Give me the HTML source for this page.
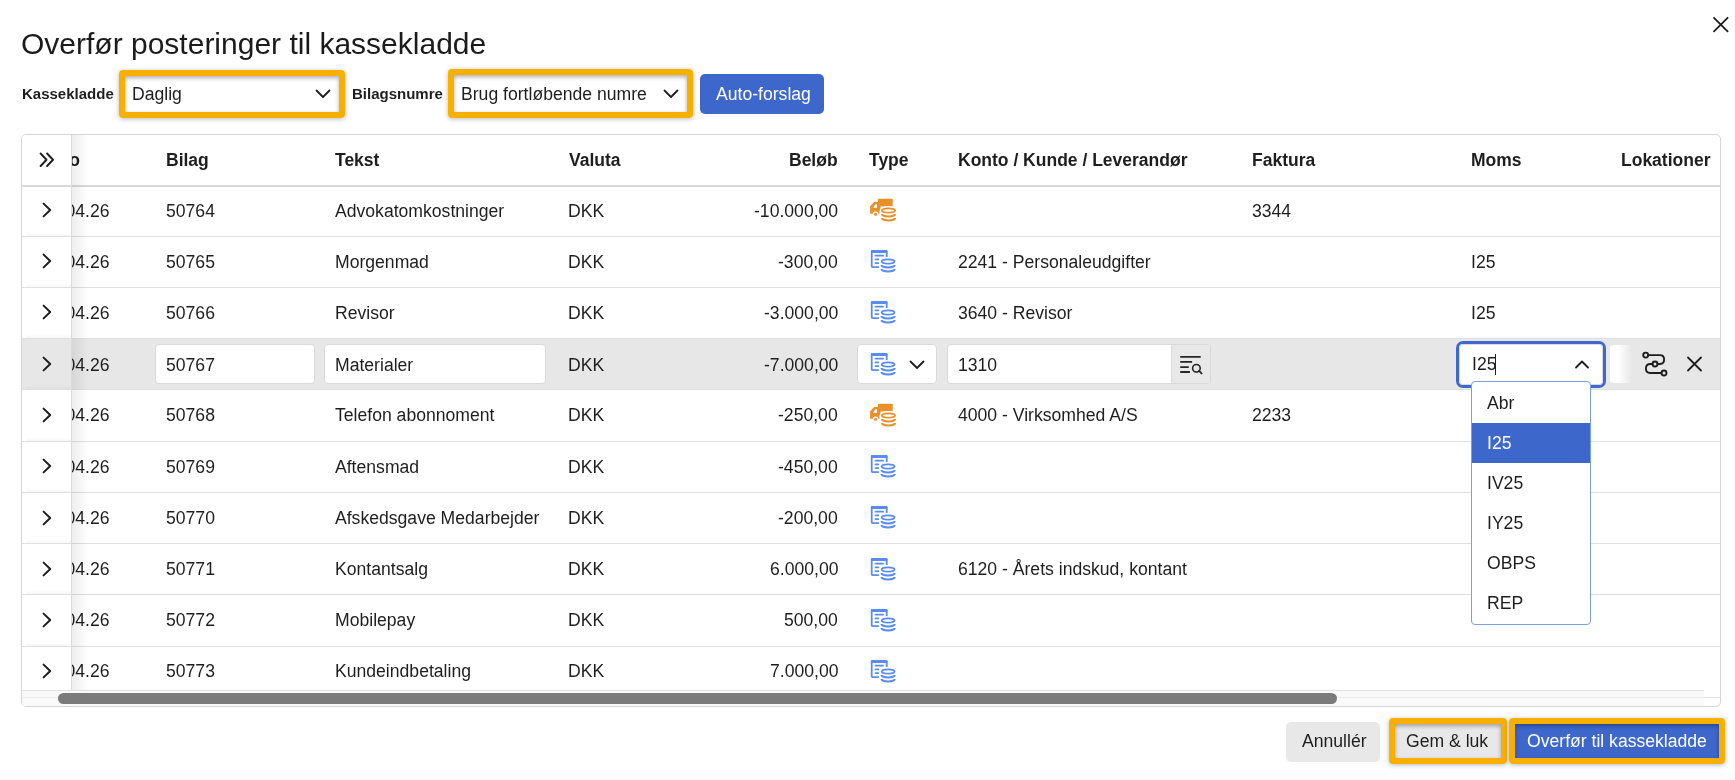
<!DOCTYPE html>
<html><head><meta charset="utf-8">
<style>
*{box-sizing:border-box;margin:0;padding:0}
html,body{width:1735px;height:780px;overflow:hidden;background:#fff;-webkit-font-smoothing:antialiased;font-family:"Liberation Sans",sans-serif;color:#1e1e1e}
.a{position:absolute;white-space:nowrap}
.t{position:absolute;white-space:nowrap;font-size:17.6px;line-height:20px;will-change:transform}
.t.b{font-size:17.5px;font-weight:bold}
.b{font-weight:bold}
.ic{position:absolute;overflow:visible}
.rl{position:absolute;left:0;width:1735px;height:1px;background:#e0e0e0}
.inp{position:absolute;background:#fff;border:1px solid #d9d9d9;border-radius:4px}
</style></head><body>

<div class="a" style="left:21px;top:25.6px;font-size:30px;line-height:36px;color:#1b1b1b;will-change:transform">Overfør posteringer til kassekladde</div>
<svg class="ic" style="left:1712px;top:16px" width="17" height="17" viewBox="0 0 17 17"><path d="M2 1.8 L15.6 15.4 M15.6 1.8 L2 15.4" stroke="#1e1e1e" stroke-width="1.8" stroke-linecap="round"/></svg>
<div class="a b" style="left:21.5px;top:85.2px;font-size:15px;line-height:18px;will-change:transform">Kassekladde</div>
<div class="a b" style="left:352px;top:85.2px;font-size:15px;line-height:18px;will-change:transform">Bilagsnumre</div>
<div class="t" style="left:131.5px;top:83.90px;">Daglig</div>
<svg class="ic" style="left:315px;top:88px" width="16" height="12" viewBox="0 0 16 12"><path d="M1.5 2.5 L8 9 L14.5 2.5" fill="none" stroke="#1e1e1e" stroke-width="1.8" stroke-linecap="round" stroke-linejoin="round"/></svg>
<div class="a" style="left:119px;top:70px;width:226px;height:48px;border:6px solid #f8b000;border-radius:4px;box-shadow:0 1px 5px rgba(0,0,0,.28), inset 0 2px 4px rgba(0,0,0,.32)"></div>
<div class="t" style="left:461px;top:83.90px;">Brug fortløbende numre</div>
<svg class="ic" style="left:663px;top:88px" width="16" height="12" viewBox="0 0 16 12"><path d="M1.5 2.5 L8 9 L14.5 2.5" fill="none" stroke="#1e1e1e" stroke-width="1.8" stroke-linecap="round" stroke-linejoin="round"/></svg>
<div class="a" style="left:448px;top:69px;width:245px;height:49px;border:6px solid #f8b000;border-radius:4px;box-shadow:0 1px 5px rgba(0,0,0,.28), inset 0 2px 4px rgba(0,0,0,.32)"></div>
<div class="a" style="left:700px;top:74px;width:124px;height:40px;background:#3d67cb;border-radius:5px"></div>
<div class="t" style="left:715.5px;top:84.20px;color:#fff">Auto-forslag</div>
<div class="a" style="left:21px;top:134px;width:1700px;height:573px;border:1px solid #d6d6d6;border-radius:5px;overflow:hidden">
<div style="position:absolute;left:-22px;top:-135px;width:1735px;height:780px">
<div class="t b" style="left:40.8px;top:149.70px;">Dato</div>
<div class="t b" style="left:166px;top:149.70px;">Bilag</div>
<div class="t b" style="left:335px;top:149.70px;">Tekst</div>
<div class="t b" style="left:568.5px;top:149.70px;">Valuta</div>
<div class="t b" style="left:868.5px;top:149.70px;">Type</div>
<div class="t b" style="left:958px;top:149.70px;">Konto / Kunde / Leverandør</div>
<div class="t b" style="left:1252px;top:149.70px;">Faktura</div>
<div class="t b" style="left:1471px;top:149.70px;">Moms</div>
<div class="t b" style="left:1621px;top:149.70px;">Lokationer</div>
<div class="t b" style="right:897px;top:149.70px;">Beløb</div>
<div class="a" style="left:0;top:185px;width:1735px;height:2px;background:#d9d9d9"></div>
<div class="t" style="left:166px;top:200.60px;">50764</div>
<div class="t" style="left:335px;top:200.60px;">Advokatomkostninger</div>
<div class="t" style="left:567.8px;top:200.60px;">DKK</div>
<div class="t" style="right:897px;top:200.60px;">-10.000,00</div>
<svg class="ic" style="left:862px;top:192px" width="40" height="36" viewBox="0 0 40 36">
<g fill="#e8912b">
<path d="M15.9 7.6 Q15.9 6.7 16.8 6.7 L29.8 6.7 Q30.7 6.7 30.7 7.6 L30.7 14.4 L15.9 14.4 Z"/>
<path d="M8.1 14.3 L12.1 9.9 L16.2 9.9 L16.2 6.9 L18.5 6.9 L18.5 21.7 L8.1 21.7 Z M11.1 15.7 L15 15.7 L15 12.2 L13.4 12.2 Z" fill-rule="evenodd"/>
</g>
<circle cx="13.6" cy="22.3" r="2.9" fill="#fff"/>
<circle cx="13.6" cy="22.3" r="1.55" fill="#e8912b"/>
<ellipse cx="26.5" cy="19" rx="9" ry="5" fill="#fff"/>
<rect x="17.5" y="19" width="18" height="11" fill="#fff"/>
<g fill="none" stroke="#e8912b" stroke-width="1.8" stroke-linecap="butt">
<ellipse cx="26.5" cy="18.5" rx="6.6" ry="2.1"/>
<path d="M19.9 22.1 A6.6 2.4 0 0 0 33.1 22.1" stroke-width="2"/>
<path d="M19.9 26 A6.6 2.4 0 0 0 33.1 26" stroke-width="2"/>
</g>
</svg>
<div class="t" style="left:1252px;top:200.60px;">3344</div>
<div class="t" style="left:40.8px;top:200.60px;">01.04.26</div>
<div class="rl" style="top:236px"></div>
<div class="t" style="left:166px;top:251.60px;">50765</div>
<div class="t" style="left:335px;top:251.60px;">Morgenmad</div>
<div class="t" style="left:567.8px;top:251.60px;">DKK</div>
<div class="t" style="right:897px;top:251.60px;">-300,00</div>
<svg class="ic" style="left:862px;top:243px" width="40" height="36" viewBox="0 0 40 36">
<g fill="none" stroke="#5a8cef" stroke-width="1.8" stroke-linecap="butt" stroke-linejoin="round">
<path d="M16.9 24.2 L10.6 24.2 Q9.7 24.2 9.7 23.3 L9.7 8.8 Q9.7 7.8 10.7 7.8 L23.7 7.8 Q24.7 7.8 24.7 8.8 L24.7 13.9"/>
</g>
<rect x="8.8" y="6.9" width="16.8" height="3.2" rx="1.4" fill="#5a8cef"/>
<g fill="none" stroke="#5a8cef" stroke-width="1.7" stroke-linecap="round">
<path d="M13.5 12.7 L21.1 12.7 M13.5 16.4 L16.3 16.4 M13.5 20.1 L16.3 20.1"/>
</g>
<g fill="none" stroke="#5a8cef" stroke-width="1.8">
<ellipse cx="26.1" cy="18.5" rx="6.4" ry="2.1"/>
<path d="M19.5 22.1 A6.6 2.4 0 0 0 32.7 22.1" stroke-width="2"/>
<path d="M19.5 26 A6.6 2.4 0 0 0 32.7 26" stroke-width="2"/>
</g>
</svg>
<div class="t" style="left:958px;top:251.60px;">2241 - Personaleudgifter</div>
<div class="t" style="left:1471px;top:251.60px;">I25</div>
<div class="t" style="left:40.8px;top:251.60px;">01.04.26</div>
<div class="rl" style="top:287px"></div>
<div class="t" style="left:166px;top:302.60px;">50766</div>
<div class="t" style="left:335px;top:302.60px;">Revisor</div>
<div class="t" style="left:567.8px;top:302.60px;">DKK</div>
<div class="t" style="right:897px;top:302.60px;">-3.000,00</div>
<svg class="ic" style="left:862px;top:294px" width="40" height="36" viewBox="0 0 40 36">
<g fill="none" stroke="#5a8cef" stroke-width="1.8" stroke-linecap="butt" stroke-linejoin="round">
<path d="M16.9 24.2 L10.6 24.2 Q9.7 24.2 9.7 23.3 L9.7 8.8 Q9.7 7.8 10.7 7.8 L23.7 7.8 Q24.7 7.8 24.7 8.8 L24.7 13.9"/>
</g>
<rect x="8.8" y="6.9" width="16.8" height="3.2" rx="1.4" fill="#5a8cef"/>
<g fill="none" stroke="#5a8cef" stroke-width="1.7" stroke-linecap="round">
<path d="M13.5 12.7 L21.1 12.7 M13.5 16.4 L16.3 16.4 M13.5 20.1 L16.3 20.1"/>
</g>
<g fill="none" stroke="#5a8cef" stroke-width="1.8">
<ellipse cx="26.1" cy="18.5" rx="6.4" ry="2.1"/>
<path d="M19.5 22.1 A6.6 2.4 0 0 0 32.7 22.1" stroke-width="2"/>
<path d="M19.5 26 A6.6 2.4 0 0 0 32.7 26" stroke-width="2"/>
</g>
</svg>
<div class="t" style="left:958px;top:302.60px;">3640 - Revisor</div>
<div class="t" style="left:1471px;top:302.60px;">I25</div>
<div class="t" style="left:40.8px;top:302.60px;">01.04.26</div>
<div class="rl" style="top:338px"></div>
<div class="a" style="left:0;top:339px;width:1735px;height:50px;background:#e7e7e7"></div>
<div class="inp" style="left:155px;top:344px;width:160px;height:40px"></div>
<div class="inp" style="left:324px;top:344px;width:222px;height:40px"></div>
<div class="t" style="left:166px;top:354.60px;">50767</div>
<div class="t" style="left:335px;top:354.60px;">Materialer</div>
<div class="t" style="left:567.8px;top:354.60px;">DKK</div>
<div class="t" style="right:897px;top:354.60px;">-7.000,00</div>
<div class="inp" style="left:857px;top:344px;width:80px;height:40px"></div>
<svg class="ic" style="left:862px;top:346px" width="40" height="36" viewBox="0 0 40 36">
<g fill="none" stroke="#5a8cef" stroke-width="1.8" stroke-linecap="butt" stroke-linejoin="round">
<path d="M16.9 24.2 L10.6 24.2 Q9.7 24.2 9.7 23.3 L9.7 8.8 Q9.7 7.8 10.7 7.8 L23.7 7.8 Q24.7 7.8 24.7 8.8 L24.7 13.9"/>
</g>
<rect x="8.8" y="6.9" width="16.8" height="3.2" rx="1.4" fill="#5a8cef"/>
<g fill="none" stroke="#5a8cef" stroke-width="1.7" stroke-linecap="round">
<path d="M13.5 12.7 L21.1 12.7 M13.5 16.4 L16.3 16.4 M13.5 20.1 L16.3 20.1"/>
</g>
<g fill="none" stroke="#5a8cef" stroke-width="1.8">
<ellipse cx="26.1" cy="18.5" rx="6.4" ry="2.1"/>
<path d="M19.5 22.1 A6.6 2.4 0 0 0 32.7 22.1" stroke-width="2"/>
<path d="M19.5 26 A6.6 2.4 0 0 0 32.7 26" stroke-width="2"/>
</g>
</svg>
<svg class="ic" style="left:908.5px;top:358.5px" width="16" height="12" viewBox="0 0 16 12"><path d="M1.5 2.5 L8 9 L14.5 2.5" fill="none" stroke="#1e1e1e" stroke-width="1.8" stroke-linecap="round" stroke-linejoin="round"/></svg>
<div class="inp" style="left:947px;top:344px;width:264px;height:40px;overflow:hidden"><div style="position:absolute;right:0;top:0;width:39px;height:100%;background:#e8e8e8;border-left:1px solid #dcdcdc"></div></div>
<div class="t" style="left:958px;top:354.60px;">1310</div>
<svg class="ic" style="left:1179px;top:353px" width="24" height="22" viewBox="0 0 24 22"><g fill="none" stroke="#262626" stroke-width="1.9"><path d="M1.2 3.9 L21.7 3.9 M1.2 8.9 L13.1 8.9 M1.2 14.1 L9.8 14.1 M1.2 19 L10.9 19"/><circle cx="17.4" cy="15.3" r="3.8" stroke-width="1.6"/><path d="M20 17.9 L22.6 20.4" stroke-linecap="round"/></g></svg>
<div class="a" style="left:1455.5px;top:340.5px;width:150px;height:47px;border:3px solid #3f68cd;border-radius:7px;background:#fff"><div style="position:absolute;inset:0;border:1px solid #d9d9d9;border-radius:4px"></div></div>
<div class="t" style="left:1471.5px;top:353.90px;">I25</div>
<div class="a" style="left:1494.5px;top:354px;width:1px;height:21px;background:#1e1e1e"></div>
<svg class="ic" style="left:1574px;top:358px" width="16" height="12" viewBox="0 0 16 12"><path d="M2 9.5 L8 3.5 L14 9.5" fill="none" stroke="#1e1e1e" stroke-width="1.8" stroke-linecap="round" stroke-linejoin="round"/></svg>
<div class="a" style="left:1609.5px;top:345px;width:40px;height:38px;border-radius:4px;background:linear-gradient(to right,#fff 0,#fff 8px,#e7e7e7 22px)"></div>
<svg class="ic" style="left:1640px;top:349px" width="30" height="30" viewBox="0 0 30 30"><g fill="none" stroke="#1e1e1e" stroke-width="1.9" stroke-linecap="round"><circle cx="5.7" cy="6.1" r="2.5"/><circle cx="15" cy="15" r="2.5"/><circle cx="24" cy="24" r="2.5"/><path d="M8.2 6.1 L20 6.1 Q24.1 6.1 24.1 10.55 Q24.1 15 20 15 L17.5 15 M12.5 15 L10.2 15 Q5.9 15 5.9 19.5 Q5.9 24 10.2 24 L21.5 24"/></g></svg>
<svg class="ic" style="left:1686px;top:356px" width="17" height="16" viewBox="0 0 17 16"><path d="M2 1.5 L15 14.5 M15 1.5 L2 14.5" stroke="#1e1e1e" stroke-width="1.8" stroke-linecap="round"/></svg>
<div class="t" style="left:40.8px;top:354.60px;">01.04.26</div>
<div class="rl" style="top:389px"></div>
<div class="t" style="left:166px;top:405.45px;">50768</div>
<div class="t" style="left:335px;top:405.45px;">Telefon abonnoment</div>
<div class="t" style="left:567.8px;top:405.45px;">DKK</div>
<div class="t" style="right:897px;top:405.45px;">-250,00</div>
<svg class="ic" style="left:862px;top:397px" width="40" height="36" viewBox="0 0 40 36">
<g fill="#e8912b">
<path d="M15.9 7.6 Q15.9 6.7 16.8 6.7 L29.8 6.7 Q30.7 6.7 30.7 7.6 L30.7 14.4 L15.9 14.4 Z"/>
<path d="M8.1 14.3 L12.1 9.9 L16.2 9.9 L16.2 6.9 L18.5 6.9 L18.5 21.7 L8.1 21.7 Z M11.1 15.7 L15 15.7 L15 12.2 L13.4 12.2 Z" fill-rule="evenodd"/>
</g>
<circle cx="13.6" cy="22.3" r="2.9" fill="#fff"/>
<circle cx="13.6" cy="22.3" r="1.55" fill="#e8912b"/>
<ellipse cx="26.5" cy="19" rx="9" ry="5" fill="#fff"/>
<rect x="17.5" y="19" width="18" height="11" fill="#fff"/>
<g fill="none" stroke="#e8912b" stroke-width="1.8" stroke-linecap="butt">
<ellipse cx="26.5" cy="18.5" rx="6.6" ry="2.1"/>
<path d="M19.9 22.1 A6.6 2.4 0 0 0 33.1 22.1" stroke-width="2"/>
<path d="M19.9 26 A6.6 2.4 0 0 0 33.1 26" stroke-width="2"/>
</g>
</svg>
<div class="t" style="left:958px;top:405.45px;">4000 - Virksomhed A/S</div>
<div class="t" style="left:1252px;top:405.45px;">2233</div>
<div class="t" style="left:40.8px;top:405.45px;">01.04.26</div>
<div class="rl" style="top:441px"></div>
<div class="t" style="left:166px;top:456.80px;">50769</div>
<div class="t" style="left:335px;top:456.80px;">Aftensmad</div>
<div class="t" style="left:567.8px;top:456.80px;">DKK</div>
<div class="t" style="right:897px;top:456.80px;">-450,00</div>
<svg class="ic" style="left:862px;top:448px" width="40" height="36" viewBox="0 0 40 36">
<g fill="none" stroke="#5a8cef" stroke-width="1.8" stroke-linecap="butt" stroke-linejoin="round">
<path d="M16.9 24.2 L10.6 24.2 Q9.7 24.2 9.7 23.3 L9.7 8.8 Q9.7 7.8 10.7 7.8 L23.7 7.8 Q24.7 7.8 24.7 8.8 L24.7 13.9"/>
</g>
<rect x="8.8" y="6.9" width="16.8" height="3.2" rx="1.4" fill="#5a8cef"/>
<g fill="none" stroke="#5a8cef" stroke-width="1.7" stroke-linecap="round">
<path d="M13.5 12.7 L21.1 12.7 M13.5 16.4 L16.3 16.4 M13.5 20.1 L16.3 20.1"/>
</g>
<g fill="none" stroke="#5a8cef" stroke-width="1.8">
<ellipse cx="26.1" cy="18.5" rx="6.4" ry="2.1"/>
<path d="M19.5 22.1 A6.6 2.4 0 0 0 32.7 22.1" stroke-width="2"/>
<path d="M19.5 26 A6.6 2.4 0 0 0 32.7 26" stroke-width="2"/>
</g>
</svg>
<div class="t" style="left:40.8px;top:456.80px;">01.04.26</div>
<div class="rl" style="top:492px"></div>
<div class="t" style="left:166px;top:508.10px;">50770</div>
<div class="t" style="left:335px;top:508.10px;">Afskedsgave Medarbejder</div>
<div class="t" style="left:567.8px;top:508.10px;">DKK</div>
<div class="t" style="right:897px;top:508.10px;">-200,00</div>
<svg class="ic" style="left:862px;top:499px" width="40" height="36" viewBox="0 0 40 36">
<g fill="none" stroke="#5a8cef" stroke-width="1.8" stroke-linecap="butt" stroke-linejoin="round">
<path d="M16.9 24.2 L10.6 24.2 Q9.7 24.2 9.7 23.3 L9.7 8.8 Q9.7 7.8 10.7 7.8 L23.7 7.8 Q24.7 7.8 24.7 8.8 L24.7 13.9"/>
</g>
<rect x="8.8" y="6.9" width="16.8" height="3.2" rx="1.4" fill="#5a8cef"/>
<g fill="none" stroke="#5a8cef" stroke-width="1.7" stroke-linecap="round">
<path d="M13.5 12.7 L21.1 12.7 M13.5 16.4 L16.3 16.4 M13.5 20.1 L16.3 20.1"/>
</g>
<g fill="none" stroke="#5a8cef" stroke-width="1.8">
<ellipse cx="26.1" cy="18.5" rx="6.4" ry="2.1"/>
<path d="M19.5 22.1 A6.6 2.4 0 0 0 32.7 22.1" stroke-width="2"/>
<path d="M19.5 26 A6.6 2.4 0 0 0 32.7 26" stroke-width="2"/>
</g>
</svg>
<div class="t" style="left:40.8px;top:508.10px;">01.04.26</div>
<div class="rl" style="top:543px"></div>
<div class="t" style="left:166px;top:559.40px;">50771</div>
<div class="t" style="left:335px;top:559.40px;">Kontantsalg</div>
<div class="t" style="left:567.8px;top:559.40px;">DKK</div>
<div class="t" style="right:897px;top:559.40px;">6.000,00</div>
<svg class="ic" style="left:862px;top:551px" width="40" height="36" viewBox="0 0 40 36">
<g fill="none" stroke="#5a8cef" stroke-width="1.8" stroke-linecap="butt" stroke-linejoin="round">
<path d="M16.9 24.2 L10.6 24.2 Q9.7 24.2 9.7 23.3 L9.7 8.8 Q9.7 7.8 10.7 7.8 L23.7 7.8 Q24.7 7.8 24.7 8.8 L24.7 13.9"/>
</g>
<rect x="8.8" y="6.9" width="16.8" height="3.2" rx="1.4" fill="#5a8cef"/>
<g fill="none" stroke="#5a8cef" stroke-width="1.7" stroke-linecap="round">
<path d="M13.5 12.7 L21.1 12.7 M13.5 16.4 L16.3 16.4 M13.5 20.1 L16.3 20.1"/>
</g>
<g fill="none" stroke="#5a8cef" stroke-width="1.8">
<ellipse cx="26.1" cy="18.5" rx="6.4" ry="2.1"/>
<path d="M19.5 22.1 A6.6 2.4 0 0 0 32.7 22.1" stroke-width="2"/>
<path d="M19.5 26 A6.6 2.4 0 0 0 32.7 26" stroke-width="2"/>
</g>
</svg>
<div class="t" style="left:958px;top:559.40px;">6120 - Årets indskud, kontant</div>
<div class="t" style="left:40.8px;top:559.40px;">01.04.26</div>
<div class="rl" style="top:594px"></div>
<div class="t" style="left:166px;top:610.40px;">50772</div>
<div class="t" style="left:335px;top:610.40px;">Mobilepay</div>
<div class="t" style="left:567.8px;top:610.40px;">DKK</div>
<div class="t" style="right:897px;top:610.40px;">500,00</div>
<svg class="ic" style="left:862px;top:602px" width="40" height="36" viewBox="0 0 40 36">
<g fill="none" stroke="#5a8cef" stroke-width="1.8" stroke-linecap="butt" stroke-linejoin="round">
<path d="M16.9 24.2 L10.6 24.2 Q9.7 24.2 9.7 23.3 L9.7 8.8 Q9.7 7.8 10.7 7.8 L23.7 7.8 Q24.7 7.8 24.7 8.8 L24.7 13.9"/>
</g>
<rect x="8.8" y="6.9" width="16.8" height="3.2" rx="1.4" fill="#5a8cef"/>
<g fill="none" stroke="#5a8cef" stroke-width="1.7" stroke-linecap="round">
<path d="M13.5 12.7 L21.1 12.7 M13.5 16.4 L16.3 16.4 M13.5 20.1 L16.3 20.1"/>
</g>
<g fill="none" stroke="#5a8cef" stroke-width="1.8">
<ellipse cx="26.1" cy="18.5" rx="6.4" ry="2.1"/>
<path d="M19.5 22.1 A6.6 2.4 0 0 0 32.7 22.1" stroke-width="2"/>
<path d="M19.5 26 A6.6 2.4 0 0 0 32.7 26" stroke-width="2"/>
</g>
</svg>
<div class="t" style="left:40.8px;top:610.40px;">01.04.26</div>
<div class="rl" style="top:646px"></div>
<div class="t" style="left:166px;top:661.40px;">50773</div>
<div class="t" style="left:335px;top:661.40px;">Kundeindbetaling</div>
<div class="t" style="left:567.8px;top:661.40px;">DKK</div>
<div class="t" style="right:897px;top:661.40px;">7.000,00</div>
<svg class="ic" style="left:862px;top:653px" width="40" height="36" viewBox="0 0 40 36">
<g fill="none" stroke="#5a8cef" stroke-width="1.8" stroke-linecap="butt" stroke-linejoin="round">
<path d="M16.9 24.2 L10.6 24.2 Q9.7 24.2 9.7 23.3 L9.7 8.8 Q9.7 7.8 10.7 7.8 L23.7 7.8 Q24.7 7.8 24.7 8.8 L24.7 13.9"/>
</g>
<rect x="8.8" y="6.9" width="16.8" height="3.2" rx="1.4" fill="#5a8cef"/>
<g fill="none" stroke="#5a8cef" stroke-width="1.7" stroke-linecap="round">
<path d="M13.5 12.7 L21.1 12.7 M13.5 16.4 L16.3 16.4 M13.5 20.1 L16.3 20.1"/>
</g>
<g fill="none" stroke="#5a8cef" stroke-width="1.8">
<ellipse cx="26.1" cy="18.5" rx="6.4" ry="2.1"/>
<path d="M19.5 22.1 A6.6 2.4 0 0 0 32.7 22.1" stroke-width="2"/>
<path d="M19.5 26 A6.6 2.4 0 0 0 32.7 26" stroke-width="2"/>
</g>
</svg>
<div class="t" style="left:40.8px;top:661.40px;">01.04.26</div>
<div class="rl" style="top:697px"></div>
<div class="a" style="left:22px;top:135px;width:50px;height:571px;background:#fff;border-right:1px solid #dcdcdc"></div>
<div class="a" style="left:72px;top:135px;width:16px;height:555px;background:linear-gradient(to right,rgba(0,0,0,.07),rgba(0,0,0,0))"></div>
<div class="a" style="left:22px;top:339px;width:49px;height:50px;background:#e7e7e7"></div>
<div class="a" style="left:22px;top:185px;width:49px;height:2px;background:#d9d9d9"></div>
<div class="a" style="left:26px;top:232px;width:45px;height:4px;background:linear-gradient(to bottom,rgba(0,0,0,0),rgba(0,0,0,.035))"></div>
<div class="a" style="left:22px;top:236px;width:49px;height:1px;background:#e0e0e0"></div>
<svg class="ic" style="left:36px;top:201.25px" width="20" height="18" viewBox="0 0 20 18"><path d="M7.6 2.6 L14.2 9 L7.6 15.4" fill="none" stroke="#1e1e1e" stroke-width="2" stroke-linecap="round" stroke-linejoin="round"/></svg>
<div class="a" style="left:26px;top:283px;width:45px;height:4px;background:linear-gradient(to bottom,rgba(0,0,0,0),rgba(0,0,0,.035))"></div>
<div class="a" style="left:22px;top:287px;width:49px;height:1px;background:#e0e0e0"></div>
<svg class="ic" style="left:36px;top:252.25px" width="20" height="18" viewBox="0 0 20 18"><path d="M7.6 2.6 L14.2 9 L7.6 15.4" fill="none" stroke="#1e1e1e" stroke-width="2" stroke-linecap="round" stroke-linejoin="round"/></svg>
<div class="a" style="left:26px;top:334px;width:45px;height:4px;background:linear-gradient(to bottom,rgba(0,0,0,0),rgba(0,0,0,.035))"></div>
<div class="a" style="left:22px;top:338px;width:49px;height:1px;background:#e0e0e0"></div>
<svg class="ic" style="left:36px;top:303.25px" width="20" height="18" viewBox="0 0 20 18"><path d="M7.6 2.6 L14.2 9 L7.6 15.4" fill="none" stroke="#1e1e1e" stroke-width="2" stroke-linecap="round" stroke-linejoin="round"/></svg>
<div class="a" style="left:26px;top:385px;width:45px;height:4px;background:linear-gradient(to bottom,rgba(0,0,0,0),rgba(0,0,0,.035))"></div>
<div class="a" style="left:22px;top:389px;width:49px;height:1px;background:#e0e0e0"></div>
<svg class="ic" style="left:36px;top:355.25px" width="20" height="18" viewBox="0 0 20 18"><path d="M7.6 2.6 L14.2 9 L7.6 15.4" fill="none" stroke="#1e1e1e" stroke-width="2" stroke-linecap="round" stroke-linejoin="round"/></svg>
<div class="a" style="left:26px;top:437px;width:45px;height:4px;background:linear-gradient(to bottom,rgba(0,0,0,0),rgba(0,0,0,.035))"></div>
<div class="a" style="left:22px;top:441px;width:49px;height:1px;background:#e0e0e0"></div>
<svg class="ic" style="left:36px;top:406.1px" width="20" height="18" viewBox="0 0 20 18"><path d="M7.6 2.6 L14.2 9 L7.6 15.4" fill="none" stroke="#1e1e1e" stroke-width="2" stroke-linecap="round" stroke-linejoin="round"/></svg>
<div class="a" style="left:26px;top:488px;width:45px;height:4px;background:linear-gradient(to bottom,rgba(0,0,0,0),rgba(0,0,0,.035))"></div>
<div class="a" style="left:22px;top:492px;width:49px;height:1px;background:#e0e0e0"></div>
<svg class="ic" style="left:36px;top:457.45px" width="20" height="18" viewBox="0 0 20 18"><path d="M7.6 2.6 L14.2 9 L7.6 15.4" fill="none" stroke="#1e1e1e" stroke-width="2" stroke-linecap="round" stroke-linejoin="round"/></svg>
<div class="a" style="left:26px;top:539px;width:45px;height:4px;background:linear-gradient(to bottom,rgba(0,0,0,0),rgba(0,0,0,.035))"></div>
<div class="a" style="left:22px;top:543px;width:49px;height:1px;background:#e0e0e0"></div>
<svg class="ic" style="left:36px;top:508.75px" width="20" height="18" viewBox="0 0 20 18"><path d="M7.6 2.6 L14.2 9 L7.6 15.4" fill="none" stroke="#1e1e1e" stroke-width="2" stroke-linecap="round" stroke-linejoin="round"/></svg>
<div class="a" style="left:26px;top:590px;width:45px;height:4px;background:linear-gradient(to bottom,rgba(0,0,0,0),rgba(0,0,0,.035))"></div>
<div class="a" style="left:22px;top:594px;width:49px;height:1px;background:#e0e0e0"></div>
<svg class="ic" style="left:36px;top:560.05px" width="20" height="18" viewBox="0 0 20 18"><path d="M7.6 2.6 L14.2 9 L7.6 15.4" fill="none" stroke="#1e1e1e" stroke-width="2" stroke-linecap="round" stroke-linejoin="round"/></svg>
<div class="a" style="left:26px;top:642px;width:45px;height:4px;background:linear-gradient(to bottom,rgba(0,0,0,0),rgba(0,0,0,.035))"></div>
<div class="a" style="left:22px;top:646px;width:49px;height:1px;background:#e0e0e0"></div>
<svg class="ic" style="left:36px;top:611.05px" width="20" height="18" viewBox="0 0 20 18"><path d="M7.6 2.6 L14.2 9 L7.6 15.4" fill="none" stroke="#1e1e1e" stroke-width="2" stroke-linecap="round" stroke-linejoin="round"/></svg>
<div class="a" style="left:26px;top:693px;width:45px;height:4px;background:linear-gradient(to bottom,rgba(0,0,0,0),rgba(0,0,0,.035))"></div>
<div class="a" style="left:22px;top:697px;width:49px;height:1px;background:#e0e0e0"></div>
<svg class="ic" style="left:36px;top:662.05px" width="20" height="18" viewBox="0 0 20 18"><path d="M7.6 2.6 L14.2 9 L7.6 15.4" fill="none" stroke="#1e1e1e" stroke-width="2" stroke-linecap="round" stroke-linejoin="round"/></svg>
<svg class="ic" style="left:36px;top:150px" width="22" height="20" viewBox="0 0 22 20"><path d="M4.6 3.5 L10.5 9.75 L4.6 16 M11.1 3.5 L17 9.75 L11.1 16" fill="none" stroke="#1e1e1e" stroke-width="1.9" stroke-linecap="round" stroke-linejoin="round"/></svg>
<div class="a" style="left:22px;top:690px;width:1682px;height:17px;background:rgba(248,248,248,.9);border-top:1px solid #e2e2e2"></div>
<div class="a" style="left:22px;top:697px;width:1682px;height:1px;background:#ececec"></div>
<div class="a" style="left:58px;top:693px;width:1279px;height:11px;background:#7b7b7b;border-radius:6px"></div>
</div></div>
<div class="a" style="left:1471px;top:381px;width:120px;height:244px;background:#fff;border:1px solid #7d9ee0;border-radius:4px;overflow:hidden">
<div class="t" style="left:15px;top:11px;">Abr</div>
<div class="a" style="left:0;top:41px;width:118px;height:40px;background:#3d67cb"></div>
<div class="t" style="left:15px;top:51px;color:#fff">I25</div>
<div class="t" style="left:15px;top:91px;">IV25</div>
<div class="t" style="left:15px;top:131px;">IY25</div>
<div class="t" style="left:15px;top:171px;">OBPS</div>
<div class="t" style="left:15px;top:211px;">REP</div>
</div>
<div class="a" style="left:1286px;top:722px;width:94px;height:40px;background:#e8e8e8;border-radius:5px"></div>
<div class="t" style="left:1302px;top:730.90px;">Annullér</div>
<div class="a" style="left:1393px;top:722px;width:110px;height:38px;background:#e8e8e8"></div>
<div class="t" style="left:1406px;top:730.90px;">Gem &amp; luk</div>
<div class="a" style="left:1389px;top:718px;width:118px;height:46px;border:6px solid #f8b000;border-radius:4px;box-shadow:0 1px 5px rgba(0,0,0,.28), inset 0 2px 4px rgba(0,0,0,.32)"></div>
<div class="a" style="left:1513px;top:722px;width:208px;height:38px;background:#3d67cb"></div>
<div class="t" style="left:1526.5px;top:730.90px;color:#fff">Overfør til kassekladde</div>
<div class="a" style="left:1509px;top:718px;width:216px;height:46px;border:6px solid #f8b000;border-radius:4px;box-shadow:0 1px 5px rgba(0,0,0,.28), inset 0 2px 4px rgba(0,0,0,.32)"></div>
<div class="a" style="left:0;top:772px;width:1735px;height:8px;background:#fcfcfc"></div>
</body></html>
